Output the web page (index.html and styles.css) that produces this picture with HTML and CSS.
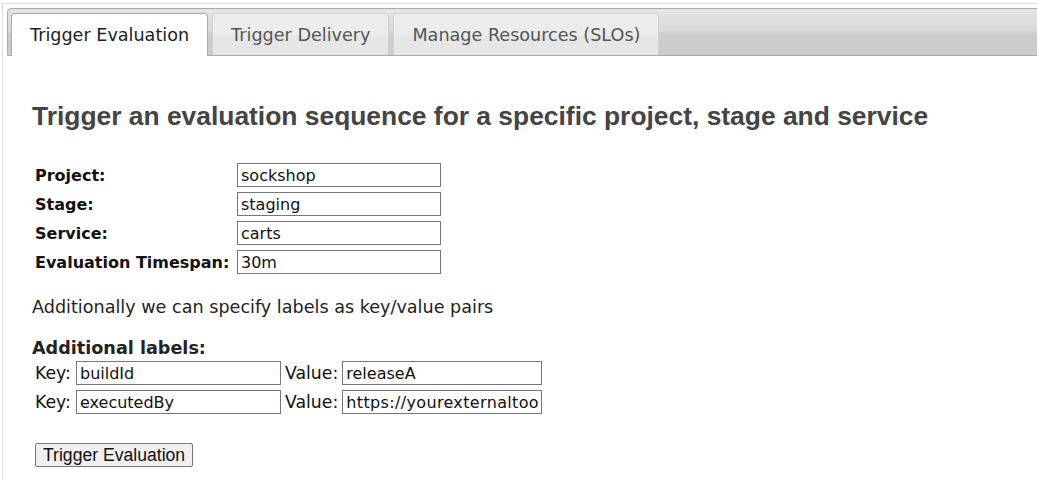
FILE: index.html
```html
<!DOCTYPE html>
<html>
<head>
<meta charset="utf-8">
<link rel="stylesheet" href="styles.css">
</head>
<body>
<div class="tabs">
  <ul class="tabs-nav">
    <li class="tab active"><a>Trigger Evaluation</a></li>
    <li class="tab"><a>Trigger Delivery</a></li>
    <li class="tab"><a>Manage Resources (SLOs)</a></li>
  </ul>
  <div class="panel">
    <h2 class="title">Trigger an evaluation sequence for a specific project, stage and service</h2>
    <table class="form-table">
      <tr><th class="label">Project:</th><td><input class="field" type="text" value="sockshop"></td></tr>
      <tr><th class="label">Stage:</th><td><input class="field" type="text" value="staging"></td></tr>
      <tr><th class="label">Service:</th><td><input class="field" type="text" value="carts"></td></tr>
      <tr><th class="label">Evaluation Timespan:</th><td><input class="field" type="text" value="30m"></td></tr>
    </table>
    <p class="hint">Additionally we can specify labels as key/value pairs</p>
    <div class="sub-title">Additional labels:</div>
    <table class="labels-table">
      <tr><td class="kv kv-key">Key:</td><td><input class="field key" type="text" value="buildId"></td><td class="kv">Value:</td><td><input class="field val" type="text" value="releaseA"></td></tr>
      <tr><td class="kv kv-key">Key:</td><td><input class="field key" type="text" value="executedBy"></td><td class="kv">Value:</td><td><input class="field val url" type="text" value="https://yourexternaltool.com/run/1234"></td></tr>
    </table>
    <div class="actions"><button class="btn" type="button">Trigger Evaluation</button></div>
  </div>
</div>
</body>
</html>
```
FILE: styles.css
```css
html, body {
  margin: 0;
  padding: 0;
  background: #fff;
  overflow: hidden;
}
body {
  font-family: "DejaVu Sans", Verdana, sans-serif;
  color: #222;
}
.tabs {
  margin: 3px 0 0 2px;
  width: 1060px;
  height: 600px;
  border: 1px solid #dddddd;
  border-right: none;
  padding: 4px;
  box-sizing: border-box;
}
.tabs-nav {
  list-style: none;
  margin: 0;
  padding: 4px 3px 0;
  display: flex;
  align-items: flex-end;
  gap: 4px;
  border: 1px solid #aaaaaa;
  border-radius: 4px 4px 0 0;
  background: linear-gradient(to bottom, #e4e4e4 0%, #dadada 45%, #cccccc 55%, #cccccc 100%);
}
.tab {
  border: 1px solid #d3d3d3;
  border-bottom: none;
  border-radius: 4px 4px 0 0;
  background: linear-gradient(to bottom, #ececec 0%, #ececec 50%, #e6e6e6 55%, #e6e6e6 100%);
  box-sizing: border-box;
  height: 42px;
}
.tab a {
  display: block;
  padding: 10px 18px 0;
  font-size: 17.6px;
  line-height: 22px;
  color: #555555;
}
.tab.active {
  background: #ffffff;
  border-color: #aaaaaa;
  height: 43px;
  margin-bottom: -1px;
}
.tab.active a {
  color: #212121;
}
.panel {
  padding: 0 25px;
}
.title {
  font-family: "Liberation Sans", Arial, sans-serif;
  font-weight: bold;
  font-size: 26.4px;
  line-height: 30px;
  color: #444;
  margin: 45px 0 29px;
}
.form-table {
  border-spacing: 2px;
  margin-left: 0;
}
.form-table th, .form-table td {
  padding: 1px 1px 2px;
}
.label {
  text-align: left;
  font-size: 16px;
  font-weight: bold;
  color: #111;
  width: 198px;
}
.field {
  font-family: "DejaVu Sans", Verdana, sans-serif;
  font-size: 16px;
  color: #111;
  height: 24px;
  box-sizing: border-box;
  border: 1px solid #767676;
  padding: 1px 3px;
  margin: 0;
  width: 204px;
  border-radius: 0;
}
.field.url {
  letter-spacing: 0.35px;
}
.hint {
  font-size: 17.6px;
  line-height: 21px;
  margin: 19px 0 0;
  color: #222;
}
.sub-title {
  margin-top: 20px;
  font-size: 17.6px;
  line-height: 21px;
  font-weight: bold;
  color: #222;
}
.labels-table {
  border-spacing: 2px;
  margin-top: -1px;
}
.labels-table td {
  padding: 1px 1px 2px;
}
.kv {
  font-size: 17.3px;
  color: #111;
}
.kv-key {
  width: 37px;
}
.field.key { width: 205px; }
.field.val { width: 200px; }
.actions {
  margin-top: 25px;
  padding-left: 3px;
}
.btn {
  font-family: "Liberation Sans", Arial, sans-serif;
  font-size: 17.6px;
  line-height: 20px;
  color: #111;
  height: 24px;
  padding: 1px 7px;
  background: #efefef;
  border: 1px solid #767676;
  border-radius: 2px;
}
```
